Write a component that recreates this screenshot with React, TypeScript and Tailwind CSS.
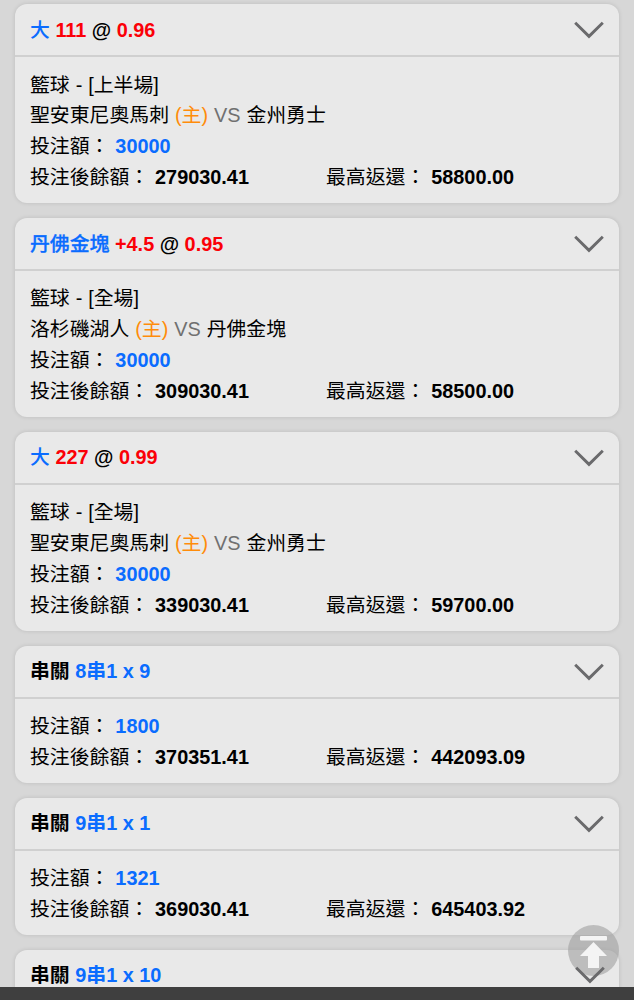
type Bet = {
  pick: string;
  line?: string;
  odds?: string;
  parlay?: boolean;
  game?: string;
  home?: string;
  away?: string;
  stake?: string;
  balance?: string;
  payout?: string;
};

const bets: Bet[] = [
  { pick: "大", line: "111", odds: "0.96", game: "籃球 - [上半場]", home: "聖安東尼奧馬刺", away: "金州勇士", stake: "30000", balance: "279030.41", payout: "58800.00" },
  { pick: "丹佛金塊", line: "+4.5", odds: "0.95", game: "籃球 - [全場]", home: "洛杉磯湖人", away: "丹佛金塊", stake: "30000", balance: "309030.41", payout: "58500.00" },
  { pick: "大", line: "227", odds: "0.99", game: "籃球 - [全場]", home: "聖安東尼奧馬刺", away: "金州勇士", stake: "30000", balance: "339030.41", payout: "59700.00" },
  { parlay: true, pick: "8串1 x 9", stake: "1800", balance: "370351.41", payout: "442093.09" },
  { parlay: true, pick: "9串1 x 1", stake: "1321", balance: "369030.41", payout: "645403.92" },
  { parlay: true, pick: "9串1 x 10" },
];

function Chevron() {
  return (
    <svg width="30" height="18" viewBox="0 0 30 18" fill="none" stroke="#6a6a6c" strokeWidth="2.9">
      <path d="M1.2 1.8L15 15.4L28.8 1.8" />
    </svg>
  );
}

// a single character already looks heavy enough without the extra stroke
function pickStyle(bet: Bet) {
  if (bet.parlay) return "text-[#0a6cff]";
  if (bet.pick.length > 1) return "font-medium text-[#0a6cff] [-webkit-text-stroke:0.3px_#0a6cff]";
  return "font-medium text-[#0a6cff]";
}

function BetCard({ bet }: { bet: Bet }) {
  return (
    <div className="shrink-0 rounded-[12px] bg-[#e9e9e9] shadow-[0_0_4px_rgba(0,0,0,0.13)]">
      <div className="flex h-[53px] items-center justify-between border-b-2 border-[#d0d0d0] pt-px pl-[15px] pr-[15px] font-bold">
        <p className="whitespace-pre">
          {bet.parlay && <span>串關 </span>}
          <span className={pickStyle(bet)}>{bet.pick}</span>
          {bet.odds && (
            <>
              <span className="text-[#fb0007] [font-kerning:normal]"> {bet.line}</span> @ <span className="text-[#fb0007]">{bet.odds}</span>
            </>
          )}
        </p>
        {bet.stake && <Chevron />}
      </div>
      {bet.stake && (
        <div className="px-[15px] pt-[12.2px] pb-[10.2px] [word-spacing:0.4px]">
          {bet.game && (
            <>
              <p>{bet.game}</p>
              <p>
                {bet.home} <span className="text-[#ff8c0a]">(主)</span> <span className="text-[#707070]">VS</span> {bet.away}
              </p>
            </>
          )}
          <p>
            投注額： <span className="font-bold text-[#0a6cff]">{bet.stake}</span>
          </p>
          <div className="flex">
            <p className="w-[296px]">
              投注後餘額： <span className="font-bold">{bet.balance}</span>
            </p>
            <p>
              最高返還： <span className="font-bold">{bet.payout}</span>
            </p>
          </div>
        </div>
      )}
    </div>
  );
}

export default function App() {
  return (
    <div className="relative flex h-[1000px] w-[634px] flex-col overflow-hidden bg-[#d7d7d7] font-['Liberation_Sans','Noto_Sans_CJK_TC',sans-serif] text-[19.88px] leading-[30.85px] text-black [font-kerning:none]">
      <div className="flex min-h-0 flex-1 flex-col gap-[15px] overflow-hidden pt-[4.4px] pr-[15px] pl-[15px]">
        {bets.map((bet, i) => (
          <BetCard key={i} bet={bet} />
        ))}
      </div>
      <div className="h-[13px] shrink-0 bg-[#3f3f3f]"></div>

      {/* back to top */}
      <button className="absolute top-[925px] left-[568px] h-[51px] w-[51px] rounded-full bg-[#a0a0a0]/60">
        <svg width="51" height="51" viewBox="0 0 51 51" fill="#f4f4f4">
          <rect x="12" y="11" width="27" height="4.5" rx="1" />
          <path d="M25.5 17L39 31H31V43H20V31H12Z" />
        </svg>
      </button>
      <div className="pointer-events-none absolute top-[966px] left-[575px]">
        <Chevron />
      </div>
    </div>
  );
}
